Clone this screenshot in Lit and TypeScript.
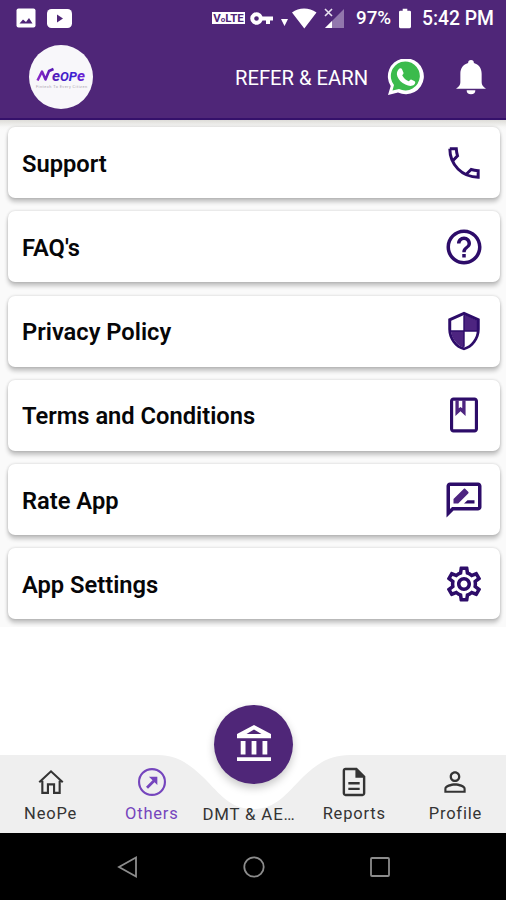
import { LitElement, html, css, svg } from "lit";
import { customElement } from "lit/decorators.js";

const paths = {
  phone: svg`<path fill="none" stroke="currentColor" stroke-width="1.700" d="M3.900 3.900H7.600C7.700 5.500 7.900 6.600 8.300 7.900L5.600 10.700M3.900 3.900C3.900 13 11 20.100 20.100 20.100V16.400C18.500 16.300 17.400 16.100 16.100 15.700L13.300 18.400"/>`,
  help: svg`<path d="M11 18h2v-2h-2v2zm1-16C6.48 2 2 6.48 2 12s4.48 10 10 10 10-4.480 10-10S17.520 2 12 2zm0 18c-4.410 0-8-3.590-8-8s3.590-8 8-8 8 3.590 8 8-3.590 8-8 8zm0-14c-2.210 0-4 1.790-4 4h2c0-1.100.9-2 2-2s2 .9 2 2c0 2-3 1.750-3 5h2c0-2.250 3-2.500 3-5 0-2.210-1.790-4-4-4z"/>`,
  shield: svg`<path fill="#4d2480" d="M12 2.500V12h7.500V6zM12 12v9.500C8.500 20.500 4.800 16.500 4.600 12z"/><path fill-rule="evenodd" d="M12 1L3 5v6c0 5.550 3.840 10.740 9 12 5.160-1.260 9-6.450 9-12V5zM12 2.900l7.300 3.300v5.300c0 4.400-3.300 8.800-7.300 9.900-4-1.100-7.300-5.500-7.300-9.900V6.200z"/><path d="M11.600 3h.8v18h-.8zM4.500 11.600h15v.8h-15z"/>`,
  book: svg`<path fill-rule="evenodd" d="M18 2H6c-1.100 0-2 .9-2 2v16c0 1.100.9 2 2 2h12c1.100 0 2-.9 2-2V4c0-1.100-.9-2-2-2zm.2 18.200H5.800V3.800h12.400z"/><path fill="#4d2480" d="M7.100 3.500H9v4.700l1-.8 1 .8V3.500h1.900v9L10 9.900l-2.900 2.600z"/>`,
  rate: svg`<path fill-rule="evenodd" d="M20 2H4c-1.100 0-2 .9-2 2v18l4-4h14c1.100 0 2-.9 2-2V4c0-1.100-.9-2-2-2zm0 14H5.170L4 17.170V4h16z"/><path d="M12 14h6v-1.900h-4z"/><path fill="#4d2480" d="M6 14h2.700l5.700-5.700c.3-.3.3-.7 0-1l-1.600-1.600c-.3-.3-.7-.3-1 0L6 11.400z"/>`,
  gear: svg`<path d="M19.430 12.980c.04-.32.07-.64.07-.98s-.03-.66-.07-.98l2.110-1.650c.19-.15.240-.42.120-.64l-2-3.460c-.09-.16-.26-.25-.44-.25-.06 0-.12.01-.17.03l-2.490 1c-.52-.4-1.080-.73-1.690-.98l-.38-2.650C14.460 2.180 14.250 2 14 2h-4c-.25 0-.46.18-.49.42l-.38 2.650c-.61.25-1.170.59-1.690.98l-2.490-1c-.06-.02-.12-.03-.18-.03-.17 0-.34.09-.43.25l-2 3.460c-.13.22-.07.490.12.64l2.110 1.650c-.04.32-.07.65-.07.98s.03.66.07.98l-2.110 1.650c-.19.15-.240.42-.12.64l2 3.460c.09.16.26.25.44.25.06 0 .12-.01.17-.03l2.490-1c.52.4 1.080.73 1.690.98l.38 2.650c.03.24.24.42.49.42h4c.25 0 .46-.18.49-.42l.38-2.650c.61-.25 1.170-.59 1.690-.98l2.490 1c.06.02.12.03.18.03.17 0 .34-.09.43-.25l2-3.460c.12-.22.07-.49-.12-.64l-2.110-1.650zm-1.980-1.710c.04.31.05.52.05.73 0 .21-.02.43-.05.73l-.14 1.130.89.700 1.080.84-.7 1.210-1.270-.51-1.040-.42-.9.68c-.43.32-.84.56-1.250.73l-1.060.43-.16 1.130-.2 1.350h-1.400l-.19-1.350-.16-1.130-1.060-.43c-.43-.18-.83-.41-1.230-.71l-.91-.7-1.060.43-1.270.51-.7-1.210 1.080-.84.89-.7-.14-1.130c-.03-.31-.05-.54-.05-.74s.02-.43.05-.73l.14-1.130-.89-.7-1.080-.84.7-1.210 1.270.51 1.040.42.9-.68c.43-.32.84-.56 1.250-.73l1.060-.43.16-1.130.2-1.350h1.390l.19 1.350.16 1.130 1.060.43c.43.18.83.41 1.230.71l.91.7 1.060-.43 1.270-.51.7 1.210-1.070.85-.89.7.14 1.130zM12 8c-2.210 0-4 1.790-4 4s1.790 4 4 4 4-1.790 4-4-1.790-4-4-4zm0 6c-1.100 0-2-.9-2-2s.9-2 2-2 2 .9 2 2-.9 2-2 2z"/>`,
  home: svg`<path fill="none" stroke="currentColor" stroke-width="1.600" d="M3.200 12.200L12 4l8.800 8.200M5.500 11v9.200h4.200v-6.400h4.600v6.400h4.200V11"/>`,
  others: svg`<circle cx="12" cy="12" r="9.700" fill="none" stroke="currentColor" stroke-width="1.600"/><path d="M9.700 8h6.300v6.300l-2.100-2.100-4.900 4.900-1.500-1.500 4.900-4.900z"/>`,
  report: svg`<path d="M8 16h8v1.700H8zm0-4h8v1.700H8zm6-10H6c-1.100 0-2 .9-2 2v16c0 1.100.89 2 1.990 2H18c1.100 0 2-.9 2-2V8l-6-6zm4.300 18.300H5.700V3.700H13V9h5.300v11.300z"/>`,
  person: svg`<path d="M12 5.700c1.270 0 2.300 1.030 2.300 2.300s-1.030 2.300-2.300 2.300S9.700 9.270 9.700 8 10.730 5.700 12 5.700m0 9.100c2.970 0 6.400 1.460 6.400 2.200v1.500H5.600V17c0-.74 3.430-2.200 6.400-2.200M12 4C9.790 4 8 5.790 8 8s1.790 4 4 4 4-1.790 4-4-1.790-4-4-4zm0 9c-2.670 0-8 1.340-8 4v3h16v-3c0-2.660-5.330-4-8-4z"/>`,
};

const icon = (name: keyof typeof paths, cls = "") =>
  html`<svg class="icon ${cls}" viewBox="0 0 24 24" fill="currentColor">${paths[name]}</svg>`;

const rows: [string, keyof typeof paths][] = [
  ["Support", "phone"],
  ["FAQ's", "help"],
  ["Privacy Policy", "shield"],
  ["Terms and Conditions", "book"],
  ["Rate App", "rate"],
  ["App Settings", "gear"],
];

@customElement("app-root")
export class AppRoot extends LitElement {
  static styles = css`
    :host { display: flex; flex-direction: column; width: 506px; height: 900px; overflow: hidden; background: #fff; font-family: Roboto, "Liberation Sans", sans-serif; color: #060608; }
    svg { display: block; flex: none; }
    .top { flex: none; height: 120px; box-sizing: border-box; background: #4f2678; border-bottom: 2px solid #35106b; color: #fff; }
    .status { display: flex; align-items: center; height: 36px; padding: 0 11px 0 16px; }
    .youtube { margin-left: 11px; }
    .volte { margin-left: auto; width: 33px; height: 12px; background: #fff; color: #4f2678; font-size: 11.500px; line-height: 12.500px; font-weight: 700; text-align: center; white-space: nowrap; }
    .volte small { font-size: 8px; }
    .key { margin-left: 5px; }
    .wifi { margin-left: 8px; }
    .signal { margin-left: 7px; }
    .pct { margin-left: 12px; width: 37px; font-size: 18.800px; font-weight: 500; white-space: nowrap; }
    .batt { margin-left: 6px; }
    .time { margin-left: 11px; width: 73px; font-size: 19.300px; font-weight: 500; white-space: nowrap; }
    .bar { display: flex; align-items: center; height: 82px; padding: 0 20px 0 29px; }
    .logo { width: 64px; height: 64px; border-radius: 50%; background: #f8f7fa; display: flex; flex-direction: column; align-items: center; justify-content: center; }
    .refer { margin-left: auto; width: 133px; padding-top: 1px; font-size: 20.200px; white-space: nowrap; }
    .whatsapp { margin-left: 19px; }
    .bell { margin-left: 32px; }
    .list { flex: none; display: flex; flex-direction: column; gap: 13.300px; padding: 7px 6px 0 8px; height: 507px; box-sizing: border-box; background: linear-gradient(#dddcd8, #f7f7f6 7px, #fafafa 10px); }
    .row { height: 71px; flex: none; box-sizing: border-box; border-radius: 7px; background: #fff; box-shadow: 0 4px 4px rgba(0,0,0,.22), 0 0 3px rgba(0,0,0,.18); display: flex; align-items: center; justify-content: space-between; padding: 2px 15px 0 14px; font-size: 23.700px; font-weight: 600; }
    .row .icon { width: 42px; height: 42px; color: #2d0c69; margin-top: -2px; }
    .space { flex: 1; }
    .nav { position: relative; flex: none; height: 78px; display: grid; grid-template-columns: repeat(5, 1fr); color: #343434; }
    .shape { position: absolute; left: 0; top: 0; z-index: 0; }
    .tab { position: relative; min-width: 0; display: flex; flex-direction: column; align-items: center; padding-top: 11px; font-size: 16.500px; letter-spacing: .8px; line-height: 20px; white-space: nowrap; }
    .tab .icon { width: 32px; height: 32px; margin-bottom: 6px; }
    .tab .icon.tall { width: 34px; height: 34px; margin: -1px 0 5px; }
    .tab.active { color: #7545bd; }
    .tab.center { align-items: flex-start; padding-top: 49px; }
    .center span { font-size: 16.800px; letter-spacing: .85px; }
    .fab { position: absolute; left: 214px; top: -50px; width: 79px; height: 79px; border-radius: 50%; background: #4f2678; color: #fff; box-shadow: 0 4px 8px rgba(0,0,0,.22); display: flex; align-items: center; justify-content: center; }
    .bank { margin-top: -4px; }
    .system { flex: none; height: 67px; background: #000; display: grid; grid-template-columns: 127px 127px 126px; justify-content: center; justify-items: center; align-items: center; }
  `;

  render() {
    return html`
      <header class="top">
        <div class="status">
          <svg width="20" height="20" viewBox="0 0 20 20"><rect x=".5" y=".5" width="19" height="19" rx="2" fill="#fff"/><path d="M3.500 15.500l3.500-4 3 2.500 3-4 3.500 5.500z" fill="#4f2678"/></svg>
          <svg class="youtube" width="25" height="19" viewBox="0 0 25 19"><rect width="25" height="19" rx="4.500" fill="#fff"/><path d="M10 5.500l6 4-6 4z" fill="#4f2678"/></svg>
          <div class="volte">V<small>o</small>LTE</div>
          <svg class="key" width="23" height="13" viewBox="0 0 23 13"><path fill="#fff" fill-rule="evenodd" d="M12.500 4.500A6.300 6.300 0 1 0 12.500 8.500H16V12h4V8.500h3v-4zM6.500 4.200a2.300 2.300 0 1 1 0 4.600 2.300 2.300 0 0 1 0-4.600z"/></svg>
          <svg class="wifi" width="36" height="21" viewBox="0 0 36 21"><path fill="#fff" d="M0 11h7l-3.500 7zM11 4.500C18-.8 28-.8 35.500 4.500L23.300 20.500z"/></svg>
          <svg class="signal" width="20" height="21" viewBox="0 0 20 21"><path d="M20 1v19H1z" fill="#9277ad"/><path d="M8 13v7H1z" fill="#fff"/><path d="M1 1l7 7M8 1L1 8" stroke="#e9e1f0" stroke-width="1.600"/></svg>
          <span class="pct">97%</span>
          <svg class="batt" width="12" height="21" viewBox="0 0 13 21"><path fill="#fff" d="M4 0h5v2h2.500q1.500 0 1.500 1.500v16q0 1.500-1.500 1.500h-10Q0 21 0 19.500v-16Q0 2 1.500 2H4z"/></svg>
          <span class="time">5:42 PM</span>
        </div>
        <div class="bar">
          <div class="logo">
            <svg width="54" height="24" viewBox="0 0 54 24">
              <defs><linearGradient id="ink" gradientUnits="userSpaceOnUse" x1="3" x2="52" y1="0" y2="0"><stop offset="0" stop-color="#8b28c8"/><stop offset=".3" stop-color="#5a1bb5"/><stop offset=".7" stop-color="#3722d2"/><stop offset="1" stop-color="#7a22d4"/></linearGradient></defs>
              <path d="M3.500 15.500L8 6.500l3.500 8L15 6l4.500-2" fill="none" stroke="url(#ink)" stroke-width="2.500" stroke-linejoin="round"/>
              <text x="18" y="15.500" textLength="33" lengthAdjust="spacingAndGlyphs" font-family="Roboto" font-size="14" font-weight="700" font-style="italic" fill="url(#ink)">e<tspan font-size="12">OP</tspan>e</text>
              <text x="2" y="23" textLength="51" font-family="Roboto" font-size="3.800" fill="#aaa3ad">Fintech To Every Citizen</text>
            </svg>
          </div>
          <span class="refer">REFER &amp; EARN</span>
          <svg class="whatsapp" width="37" height="37" viewBox="0 0 37 37"><path fill="#fff" d="M1 36l2.700-9A18 18 0 1 1 11 33.500z"/><path fill="#3bbb4c" d="M5.500 31.500l1.500-5.500A14.500 14.500 0 1 1 12 30z"/><path fill="#fff" d="M11.500 10.500c1-1.500 3-1.500 3.500-.3l1.500 3.500c.3 1-.9 2-1.300 2.600 1.500 3 3.700 4.800 6.500 6 .7-.4 1.500-2 2.400-1.900l3.600 1.800c1 .6.500 2.400-.4 3.300-2.300 2.200-5.600 1.600-8.900.1-4-1.900-6.500-4.800-8-8.200-1-2.500-.5-4.900 1.100-6.900z"/></svg>
          <svg class="bell" width="30" height="35" viewBox="0 0 31 36"><path fill="#fff" d="M15.500 0a3 3 0 0 1 3 3c5 1.500 8 5.500 8 11v9c0 3 1.500 4.500 4.500 6.500H0C3 27.500 4.500 26 4.500 23v-9c0-5.500 3-9.500 8-11a3 3 0 0 1 3-3zM11 31.300h9a4.500 4 0 0 1-9 0z"/></svg>
        </div>
      </header>
      <main class="list">
        ${rows.map(([label, name]) => html`<div class="row"><span>${label}</span>${icon(name)}</div>`)}
      </main>
      <div class="space"></div>
      <nav class="nav">
        <svg class="shape" width="506" height="78" viewBox="0 0 506 78"><path fill="#efefef" d="M0 0H158C178 0 190 10 203 22C221 40 230 54 253 54S285 40 303 22C316 10 328 0 350 0H506V78H0z"/></svg>
        <div class="tab">${icon("home")}<span>NeoPe</span></div>
        <div class="tab active">${icon("others")}<span>Others</span></div>
        <div class="tab center"><span>DMT &amp; AE…</span></div>
        <div class="tab">${icon("report", "tall")}<span>Reports</span></div>
        <div class="tab">${icon("person")}<span>Profile</span></div>
        <div class="fab">
          <svg class="bank" width="34" height="36" viewBox="0 0 34 36" fill="currentColor"><path fill-rule="evenodd" d="M17 0L34 9v4.200H0V9zM17 4.500L9.500 9h15z"/><path d="M3.700 16h4.800v13.500H3.700zM14.600 16h4.800v13.500h-4.800zM25.500 16h4.800v13.500h-4.800zM0 32.200h34V36H0z"/></svg>
        </div>
      </nav>
      <footer class="system">
        <svg width="22" height="24" viewBox="0 0 22 24"><path d="M20 2.500v19L3 12z" fill="none" stroke="#8c8c8c" stroke-width="1.800"/></svg>
        <svg width="24" height="24" viewBox="0 0 24 24"><circle cx="12" cy="12" r="9.700" fill="none" stroke="#8c8c8c" stroke-width="1.800"/></svg>
        <svg width="22" height="22" viewBox="0 0 22 22"><rect x="2" y="2" width="18" height="18" rx="1" fill="none" stroke="#8c8c8c" stroke-width="1.800"/></svg>
      </footer>
    `;
  }
}
